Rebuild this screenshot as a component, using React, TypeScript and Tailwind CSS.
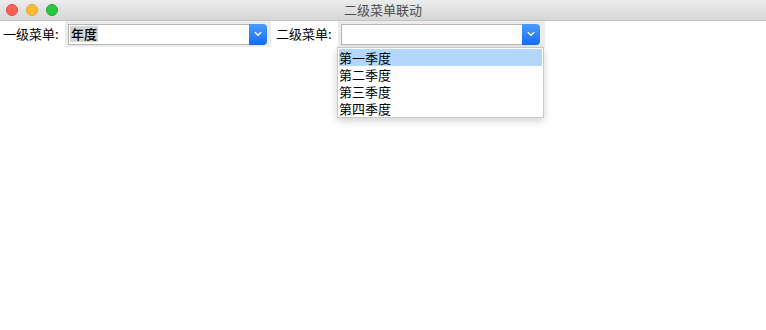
import React from "react";

const FONT = '"Noto Sans CJK SC", "Noto Sans", "Liberation Sans", sans-serif';

function Chevron() {
  return (
    <svg width="8" height="6" viewBox="0 0 8 6" fill="none">
      <path d="M1.2 1.6 L4 4.2 L6.8 1.6" stroke="white" strokeWidth="1.4" strokeLinecap="round" strokeLinejoin="round" />
    </svg>
  );
}

function Combo(props: { value?: string }) {
  return (
    <div className="flex h-[21px] w-[199px]">
      <div className="flex flex-1 items-center border border-r-0 border-[#b5b5b5] bg-white pl-[1px]">
        {props.value ? (
          <span className="bg-[#d6d6d6] px-[1px] text-[13px] leading-[16px] font-medium text-black">{props.value}</span>
        ) : null}
      </div>
      <div className="flex w-[18px] items-center justify-center rounded-r-[4px] bg-gradient-to-b from-[#4a9bfa] to-[#116cf3]">
        <Chevron />
      </div>
    </div>
  );
}

const quarters = ["第一季度", "第二季度", "第三季度", "第四季度"];

export default function App() {
  return (
    <div className="h-[330px] w-[766px] bg-white text-[13px] text-black" style={{ fontFamily: FONT }}>
      {/* title bar */}
      <div className="relative flex h-[21px] items-center border-b border-[#c4c4c4] bg-gradient-to-b from-[#ececec] to-[#d6d6d6]">
        <div className="flex gap-[8px] pl-[6px]">
          <span className="h-[12px] w-[12px] rounded-full border border-[#e2463f] bg-[#fc5f57]" />
          <span className="h-[12px] w-[12px] rounded-full border border-[#e1a02f] bg-[#fdbc2e]" />
          <span className="h-[12px] w-[12px] rounded-full border border-[#23a534] bg-[#28c840]" />
        </div>
        <div className="absolute inset-0 flex items-center justify-center text-[13px] text-[#4d4d4d]">二级菜单联动</div>
      </div>

      {/* content row */}
      <div className="flex items-start">
        <div className="flex h-[26px] w-[65px] items-center pl-[3px]">一级菜单:</div>
        <div className="flex h-[26px] w-[206px] items-center bg-[#ececec] pl-[3px]">
          <Combo value="年度" />
        </div>
        <div className="flex h-[26px] w-[67px] items-center pl-[5px]">二级菜单:</div>
        <div className="relative flex h-[26px] w-[207px] items-center bg-[#ececec] pl-[3px]">
          <Combo />
          <div className="absolute left-[-1px] top-[26px] z-10 h-[71px] w-[207px] border border-[#c8c8c8] bg-white p-[1px] shadow-[0_3px_8px_rgba(0,0,0,0.18)]">
            {quarters.map((q, i) => (
              <div
                key={q}
                className={
                  i === 0
                    ? "h-[17px] bg-[#b3d7fa] pl-[0px] leading-[17px]"
                    : "h-[17px] pl-[0px] leading-[17px]"
                }
              >
                {q}
              </div>
            ))}
          </div>
        </div>
      </div>
    </div>
  );
}
